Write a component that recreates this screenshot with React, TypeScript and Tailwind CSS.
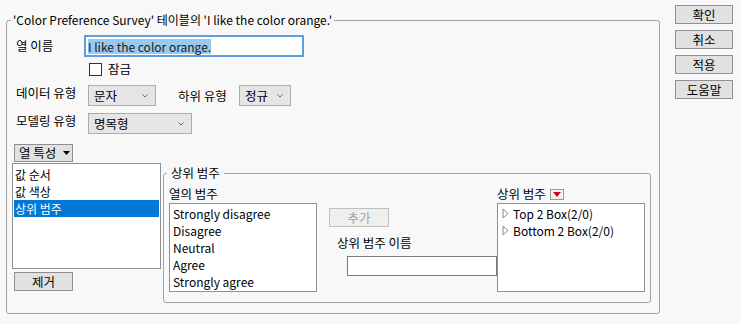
import React from "react";

const KO = "text-[12.5px]";

function Chevron() {
  return (
    <svg width="6" height="4" viewBox="0 0 6 4" className="shrink-0">
      <path d="M0.5 0.5 L3 3 L5.5 0.5" fill="none" stroke="#6b6b6b" strokeWidth="1" />
    </svg>
  );
}

function Select({ label, w }: { label: string; w: string }) {
  return (
    <div className={`${w} h-[21px] flex items-center justify-between pl-[5px] pr-[7px] bg-[#e5e5e5] border border-[#acacac]`}>
      <span className={KO}>{label}</span>
      <Chevron />
    </div>
  );
}

function Btn({ label, w = "w-[58px]", h = "h-[19px]" }: { label: string; w?: string; h?: string }) {
  return (
    <div className={`${w} ${h} flex items-center justify-center bg-[#e1e1e1] border border-[#8f8f8f] ${KO}`}>
      {label}
    </div>
  );
}

function Tri() {
  return (
    <svg width="7" height="11" viewBox="0 0 7 11" className="shrink-0">
      <path d="M1 1 L6 5.5 L1 10 Z" fill="none" stroke="#8a8a8a" strokeWidth="1" />
    </svg>
  );
}

export default function App() {
  return (
    <div className="w-[741px] h-[324px] bg-[#f8f8f8] flex text-[12px] leading-[16px] text-black font-['Noto_Sans_CJK_KR',sans-serif]">
      <div className="pl-[6px] pt-[12px]">
        <fieldset className="w-[654px] h-[302px] border border-[#a3a3a3] rounded-[3px]">
          <legend className="ml-[4px] px-[2px] whitespace-nowrap">
            'Color Preference Survey' 테이블의 'I like the color orange.'
          </legend>
          <div className="pl-[5px] pt-[7px] flex flex-col">
            {/* Row 1 */}
            <div className="flex items-center h-[22px]">
              <span className={`ml-[4px] w-[68px] ${KO}`}>열 이름</span>
              <div className="w-[220px] h-[22px] border-2 border-[#5b9ee3] bg-white flex items-center pl-[2px]">
                <span className="bg-[#99c9ef] text-[#1a1a1a] leading-[15px]">I like the color orange.</span>
              </div>
            </div>
            {/* Row 2 */}
            <div className="mt-[4px] h-[16px] flex items-center pl-[77px]">
              <div className="w-[13px] h-[13px] border border-[#333] bg-white" />
              <span className={`ml-[6px] ${KO}`}>잠금</span>
            </div>
            {/* Row 3 */}
            <div className="mt-[8px] h-[21px] flex items-center">
              <span className={`ml-[4px] w-[72px] self-start ${KO}`}>데이터 유형</span>
              <Select label="문자" w="w-[68px]" />
              <span className={`ml-[22px] w-[61px] ${KO}`}>하위 유형</span>
              <Select label="정규" w="w-[52px]" />
            </div>
            {/* Row 4 */}
            <div className="mt-[7px] h-[21px] flex items-center">
              <span className={`ml-[4px] w-[72px] self-start ${KO}`}>모델링 유형</span>
              <Select label="명목형" w="w-[104px]" />
            </div>
            {/* Row 5 */}
            <div className="mt-[10px] ml-[2px] w-[59px] h-[18px] flex items-center justify-between pl-[4px] pr-[2px] bg-[#e1e1e1] border border-[#8f8f8f]">
              <span className={KO}>열 특성</span>
              <svg width="7" height="4" viewBox="0 0 7 4">
                <path d="M0 0 L7 0 L3.5 4 Z" fill="#000" />
              </svg>
            </div>
            {/* Bottom area */}
            <div className="mt-[1px] flex">
              <div className="w-[149px] flex flex-col">
                <div className="h-[106px] bg-white border border-[#8f8f8f] pt-[2px] px-[1px] flex flex-col">
                  <div className="h-[17px] flex items-center pl-[1px]">값 순서</div>
                  <div className="h-[17px] flex items-center pl-[1px]">값 색상</div>
                  <div className="h-[17px] flex items-center pl-[1px] bg-[#0078d7] text-white">상위 범주</div>
                </div>
                <div className="mt-[3px] ml-[2px]">
                  <Btn label="제거" w="w-[59px]" />
                </div>
              </div>
              <fieldset className="ml-[2px] mt-[2px] w-[488px] h-[138px] border border-[#a3a3a3] rounded-[3px]">
                <legend className={`ml-[3px] px-[4px] whitespace-nowrap ${KO}`}>상위 범주</legend>
                <div className="pl-[5px] flex">
                  <div className="w-[148px] pt-[5px] flex flex-col">
                    <span className={`${KO} leading-[16px]`}>열의 범주</span>
                    <div className="mt-[1px] h-[89px] bg-white border border-[#8f8f8f] pt-[1px] pl-[3px] flex flex-col">
                      <div className="h-[17px] flex items-center">Strongly disagree</div>
                      <div className="h-[17px] flex items-center">Disagree</div>
                      <div className="h-[17px] flex items-center">Neutral</div>
                      <div className="h-[17px] flex items-center">Agree</div>
                      <div className="h-[17px] flex items-center">Strongly agree</div>
                    </div>
                  </div>
                  <div className="w-[180px] pt-[27px] flex flex-col">
                    <div className={`ml-[12px] w-[60px] h-[19px] flex items-center justify-center bg-[#efefef] border border-[#bfbfbf] text-[#a3a3a3] ${KO}`}>
                      추가
                    </div>
                    <span className={`mt-[8px] ml-[20px] leading-[16px] ${KO}`}>상위 범주 이름</span>
                    <div className="mt-[5px] ml-[30px] w-[150px] h-[20px] bg-white border border-[#7a7a7a]" />
                  </div>
                  <div className="w-[148px] pt-[5px] flex flex-col">
                    <div className="flex items-center h-[16px]">
                      <span className={KO}>상위 범주</span>
                      <div className="ml-[4px] w-[14px] h-[11px] border border-[#9a9a9a] bg-[#f2f2f2] flex items-center justify-center">
                        <svg width="8" height="5" viewBox="0 0 8 5">
                          <path d="M0 0 L8 0 L4 5 Z" fill="#d0021b" />
                        </svg>
                      </div>
                    </div>
                    <div className="mt-[1px] h-[89px] bg-white border border-[#8f8f8f] pt-[1px] pl-[4px] flex flex-col">
                      <div className="h-[17px] flex items-center gap-[4px]">
                        <Tri />
                        <span>Top 2 Box(2/0)</span>
                      </div>
                      <div className="h-[17px] flex items-center gap-[4px]">
                        <Tri />
                        <span>Bottom 2 Box(2/0)</span>
                      </div>
                    </div>
                  </div>
                </div>
              </fieldset>
            </div>
          </div>
        </fieldset>
      </div>
      <div className="ml-[15px] pt-[5px] flex flex-col gap-[6px]">
        <Btn label="확인" />
        <Btn label="취소" />
        <Btn label="적용" />
        <Btn label="도움말" />
      </div>
    </div>
  );
}
